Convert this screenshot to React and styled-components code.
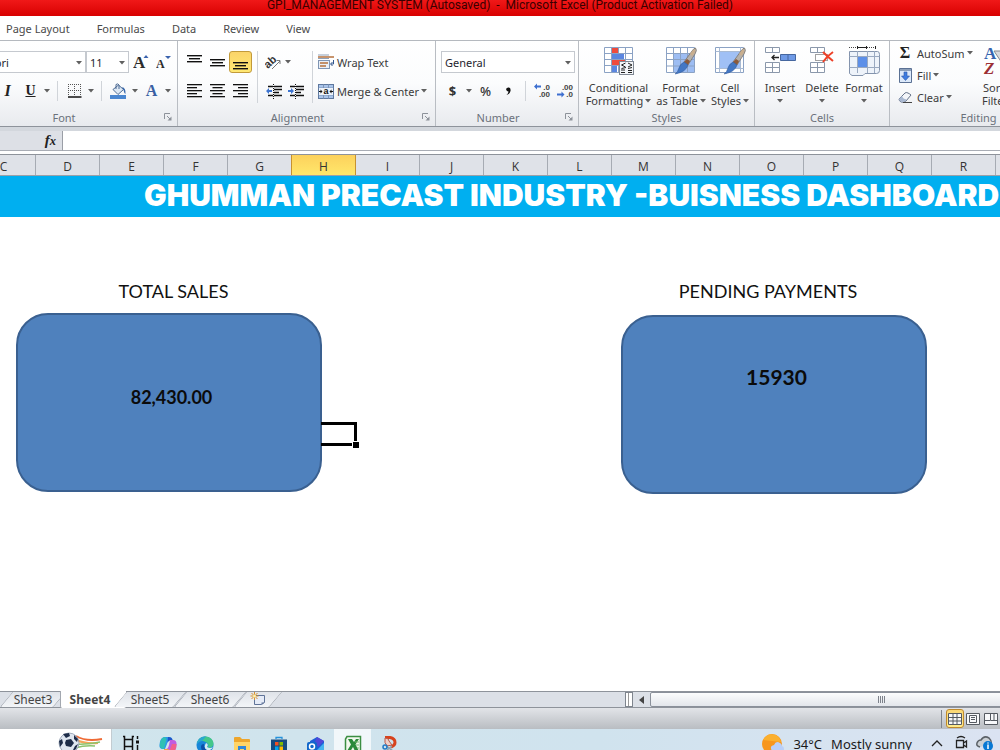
import React from 'react';
import styled, { createGlobalStyle, css } from 'styled-components';

const GlobalStyle = createGlobalStyle`
    * {
        box-sizing: border-box;
    }
    body {
        margin: 0;
        overflow: hidden;
        background: #fff;
        font-family: 'Noto Sans', 'Open Sans', sans-serif;
        font-size: 11px;
        color: #3b3b3b;
    }
    button,
    select,
    input {
        font: inherit;
        color: inherit;
        margin: 0;
        padding: 0;
        border: 0;
        background: none;
    }
    svg {
        display: block;
        flex: none;
    }
`;

const Window = styled.div`
    display: flex;
    flex-direction: column;
    height: 100vh;
    overflow: hidden;
`;

/* ---------- title bar and ribbon tabs ---------- */

const TitleBar = styled.header`
    display: flex;
    justify-content: center;
    flex: none;
    height: 16px;
    overflow: hidden;
    background: linear-gradient(#f01818, #d80000);
    color: #3a0000;
    font-family: Roboto, sans-serif;
    font-size: 12px;
    line-height: 10px;
    white-space: pre;
`;

const RibbonTabs = styled.nav`
    display: flex;
    flex: none;
    gap: 27px;
    height: 25px;
    padding-left: 6px;
    border-bottom: 1px solid #b5b9bf;
    background: #fff;
`;

const RibbonTab = styled.button`
    color: #4a4a4a;
    line-height: 26px;
    white-space: nowrap;
`;

/* ---------- ribbon ---------- */

const Ribbon = styled.div`
    display: flex;
    flex: none;
    height: 86px;
    overflow: hidden;
    border-bottom: 1px solid #8e939b;
    background: linear-gradient(#fff, #fbfcfd 50%, #e8eaee);
`;

const Group = styled.section`
    display: flex;
    flex-direction: column;
    flex: none;
    width: ${({ $width }) => $width}px;
    margin-left: ${({ $scrolled }) => ($scrolled ? -$scrolled : 0)}px;
    border-right: 1px solid #b9bdc3;
`;

const GroupBody = styled.div`
    display: flex;
    flex: 1;
    padding: 0 ${({ $pad = 4 }) => $pad}px;
`;

const GroupTitle = styled.footer`
    display: flex;
    align-items: center;
    height: 18px;
    color: #6b717b;

    span {
        flex: 1;
        text-align: center;
    }

    svg {
        margin: 0 5px;
    }
`;

const Rows = styled.div`
    display: flex;
    flex-direction: column;
    gap: 5px;
    padding-top: 9px;
`;

const Row = styled.div`
    display: flex;
    align-items: center;
    height: 24px;
`;

const Tool = styled.button`
    display: flex;
    align-items: center;
    justify-content: center;
    flex: none;
    width: ${({ $width = 23 }) => $width}px;
    height: 24px;
    border-radius: 3px;

    ${({ $active }) =>
        $active &&
        css`
            height: 22px;
            border: 1px solid #c29a3a;
            background: linear-gradient(#fbd469, #ffe873);
        `}
`;

const TextTool = styled.button`
    display: flex;
    align-items: center;
    gap: 2px;
    height: 22px;
    white-space: nowrap;
`;

const Glyph = styled.span`
    color: ${({ $color = '#222' }) => $color};
    font-family: 'Liberation Serif', serif;
    font-size: ${({ $size = 16 }) => $size}px;
    font-weight: bold;
    font-style: ${({ $italic }) => ($italic ? 'italic' : 'normal')};
    text-decoration: ${({ $underline }) => ($underline ? 'underline' : 'none')};
    line-height: 20px;
`;

const Symbol = styled.span`
    color: #333;
    font-size: 13px;
    font-weight: ${({ $bold }) => ($bold ? 700 : 500)};
`;

const Separator = styled.i`
    flex: none;
    width: 1px;
    height: ${({ $tall }) => ($tall ? 52 : 20)}px;
    margin: ${({ $tall }) => ($tall ? '10px 5px 0' : '0 5px')};
    background: #d0d4d9;
`;

const Field = styled.label`
    position: relative;
    display: block;
    width: ${({ $width }) => $width}px;

    select {
        display: block;
        width: 100%;
        height: 22px;
        padding-left: ${({ $inset = 3 }) => $inset}px;
        appearance: none;
        border: 1px solid #c5c9cf;
        background: #fff;
        color: #1e1e2e;
    }

    svg {
        position: absolute;
        top: 10px;
        right: 4px;
    }
`;

const LargeTool = styled.button`
    display: flex;
    flex-direction: column;
    align-items: center;
    flex: none;
    width: ${({ $width }) => $width}px;
    padding-top: 5px;
    line-height: 13px;
    white-space: nowrap;

    > svg {
        margin-bottom: 5px;
    }

    span {
        display: flex;
        align-items: center;
        gap: 2px;
        height: 13px;
    }
`;

const EditRows = styled.div`
    display: flex;
    flex-direction: column;
    width: 82px;
    padding-top: 1px;
`;

/* ---------- formula bar and worksheet ---------- */

const FormulaBar = styled.div`
    display: flex;
    flex: none;
    height: 28px;
    padding: 4px 0 3px;
    border-bottom: 1px solid #8e939b;
    background: linear-gradient(#d3d7dd 4px, #fff 4px);

    label {
        display: flex;
        align-items: center;
        justify-content: flex-end;
        width: 63px;
        padding-right: 6px;
        border-right: 1px solid #9a9ea6;
        border-bottom: 1px solid #a9adb5;
        background: #dde0e6;
    }

    input {
        flex: 1;
        border-bottom: 1px solid #a9adb5;
        background: #fff;
    }
`;

const ColumnHeaders = styled.div`
    display: flex;
    flex: none;
    height: 21px;
    margin-left: -28px;
    overflow: hidden;
    border-bottom: 1px solid #9ba0a8;
    background: #dfe2e8;
`;

const ColumnHeader = styled.button`
    flex: none;
    width: 64px;
    border-right: 1px solid #a6abb3;
    color: #333;
    font-family: 'Open Sans', sans-serif;
    font-size: 12px;
    line-height: 23px;

    ${({ $active }) =>
        $active &&
        css`
            border-right-color: #c7922f;
            box-shadow: -1px 0 #c7922f;
            background: linear-gradient(#fcd15c, #ffe76b);
        `}
`;

const Sheet = styled.main`
    flex: 1;
    min-height: 0;
    overflow: hidden;
    background: #fff;
`;

const Banner = styled.h1`
    height: 41px;
    margin: 0;
    padding-left: 144px;
    overflow: hidden;
    background: #00aff0;
    color: #fff;
    font-family: Inter, 'Liberation Sans', sans-serif;
    font-size: 30px;
    font-weight: 900;
    line-height: 38px;
    white-space: nowrap;
`;

const Metrics = styled.div`
    display: flex;
    justify-content: space-between;
    padding: 62px 73px 0 16px;
    font-family: Lato, sans-serif;
    color: #111;
`;

const Metric = styled.section`
    position: relative;
    width: 306px;
`;

const MetricTitle = styled.h2`
    height: 34px;
    margin: 0;
    padding: ${({ $align }) => ($align === 'left' ? '0 12px 0 0' : '0 0 0 9px')};
    font-size: 18px;
    font-weight: 400;
    line-height: 24px;
    text-align: center;
`;

const MetricCard = styled.div`
    height: 179px;
    margin-top: ${({ $drop = 0 }) => $drop}px;
    padding: ${({ $inset }) => $inset}px 0 0 5px;
    border: 2px solid #3a6090;
    border-radius: 32px;
    background: #4f81bd;
    color: #0b0b0b;
    font-size: ${({ $size }) => $size}px;
    font-weight: 700;
    line-height: 24px;
    text-align: center;
`;

const Selection = styled.i`
    position: absolute;
    top: 143px;
    left: 305px;
    width: 36px;
    height: 24px;
    border: 3px solid #000;
    border-left: 0;

    &::after {
        content: '';
        position: absolute;
        right: -5px;
        bottom: -5px;
        width: 6px;
        height: 6px;
        border: 1px solid #fff;
        border-width: 1px 0 0 1px;
        background: #000;
    }
`;

/* ---------- sheet tabs and status bar ---------- */

const SheetBar = styled.div`
    display: flex;
    justify-content: space-between;
    flex: none;
    height: 17px;
    border-top: 1px solid #8e939b;
    border-bottom: 1px solid #8e939b;
    background: #dce0e7;
`;

const SheetTabs = styled.nav`
    display: flex;
    padding-left: 6px;
`;

const SheetTab = styled.button`
    position: relative;
    display: flex;
    justify-content: center;
    width: ${({ $width = 60 }) => $width}px;
    color: #444;
    font-size: 12px;
    font-weight: ${({ $active }) => ($active ? 700 : 400)};
    line-height: 15px;

    &::before {
        content: '';
        position: absolute;
        inset: 0;
        border: 1px solid #a3a8b0;
        border-width: 0 1px 0 1px;
        border-radius: 0 0 2px 2px;
        background: linear-gradient(#dfe3e9, #f3f5f8);
        transform: skewX(-40deg);

        ${({ $active }) =>
            $active &&
            css`
                inset: -1px -6px -1px 0;
                border-width: 0 0 0 1px;
                background: #fff;
                transform: none;
            `}
    }

    span,
    svg {
        position: relative;
    }
`;

const ScrollBar = styled.div`
    display: flex;
    width: 375px;
    overflow: hidden;
`;

const Splitter = styled.i`
    flex: none;
    width: 8px;
    border: 1px solid #7f858e;
    background: linear-gradient(90deg, #fff 2px, #999 2px, #999 3px, #fff 3px);
`;

const ScrollArrow = styled.button`
    display: flex;
    align-items: center;
    justify-content: center;
    flex: none;
    width: 17px;
`;

const ScrollThumb = styled.button`
    display: flex;
    align-items: center;
    justify-content: center;
    flex: none;
    gap: 1px;
    width: 462px;
    border: 1px solid #8a909a;
    border-radius: 2px;
    background: linear-gradient(#fbfcfd, #e3e6eb);

    i {
        width: 1px;
        height: 7px;
        background: #7d828b;
    }
`;

const StatusBar = styled.footer`
    display: flex;
    align-items: center;
    justify-content: flex-end;
    flex: none;
    height: 21px;
    overflow: hidden;
    background: linear-gradient(#e2e4e8, #b9bdc2);
`;

const ViewButton = styled.button`
    display: flex;
    align-items: center;
    justify-content: center;
    flex: none;
    width: 18px;
    height: 19px;
    border-radius: 3px;

    ${({ $active }) =>
        $active &&
        css`
            border: 1px solid #c08a2c;
            background: linear-gradient(#fbd774, #ffec8c);
        `}
`;

const ViewDivider = styled.i`
    width: 1px;
    height: 18px;
    margin-right: 4px;
    background: #80858c;
`;

/* ---------- taskbar ---------- */

const Taskbar = styled.footer`
    display: flex;
    flex: none;
    height: 21px;
    overflow: hidden;
    background: linear-gradient(90deg, #d0e5ec, #d0e3ee 60%, #dbe3f2);
    color: #1a1a1a;
`;

const SearchBox = styled.button`
    display: flex;
    width: 112px;
    height: 21px;
    padding: 3px 0 0 58px;
    border-right: 1px solid #c3ccd1;
    background: #fff;
`;

const TaskButton = styled.button`
    display: flex;
    justify-content: center;
    width: 37px;
    height: 40px;
    padding-top: 6px;
    background: ${({ $active }) => ($active ? '#f1f7fa' : 'none')};
`;

const Tray = styled.div`
    display: flex;
    flex: 1;
    justify-content: flex-end;
    padding-right: 3px;
    font-size: 13px;
    line-height: 20px;
    white-space: nowrap;
`;

const Weather = styled.button`
    display: flex;
    gap: 9px;
    height: 30px;
    padding: 5px 13px 0 0;
`;

const TrayButton = styled.button`
    display: flex;
    justify-content: center;
    width: 24px;
    height: 30px;
    padding-top: 6px;
`;

/* ---------- icons ---------- */

const Caret = () => (
    <svg width="6" height="4" viewBox="0 0 6 4" aria-hidden="true">
        <path d="M0 0h6L3 3.500z" fill="#606060" />
    </svg>
);

const Launcher = () => (
    <svg width="8" height="8" viewBox="0 0 8 8" fill="none" stroke="#8d929a" aria-hidden="true">
        <path d="M.5 6V.5H6M3 3l3.500 3.500" />
        <path d="M7.500 3.500V7.500H3.500z" fill="#8d929a" stroke="none" />
    </svg>
);

const Lines = ({ widths, align = 'left', step = 3 }) => (
    <svg width="16" height="16" viewBox="0 0 16 16" aria-hidden="true">
        {widths.map((w, i) => {
            const x = { left: 0, center: (15 - w) / 2, right: 15 - w }[align];
            return <rect key={i} x={x} y={1 + i * step} width={w} height="1.300" fill="#111" />;
        })}
    </svg>
);

const VerticalLines = ({ top }) => (
    <svg width="16" height="20" viewBox="0 0 16 20" fill="#111" aria-hidden="true">
        {[15, 11, 15].map((w, i) => (
            <rect key={i} x={(15 - w) / 2} y={top + i * 3} width={w} height="1.400" />
        ))}
    </svg>
);

const GrowFont = ({ shrink }) => (
    <svg width="16" height="18" viewBox="0 0 16 18" aria-hidden="true">
        <text
            x="0"
            y="15"
            fontFamily="Liberation Serif"
            fontWeight="bold"
            fontSize={shrink ? 12 : 17}
            fill="#2c2c2c"
        >
            A
        </text>
        <path d={shrink ? 'M9 3h6l-3 3z' : 'M10.500 5h5l-2.500-3z'} fill="#3a62ad" />
    </svg>
);

const BordersIcon = () => (
    <svg width="14" height="14" viewBox="0 0 14 14" fill="none" stroke="#555" aria-hidden="true">
        <path d="M0 .5h13M0 6.500h13M.5 0v12M6.500 0v12M12.500 0v12" strokeDasharray="1 1" />
        <path d="M0 13h13.500" stroke="#111" strokeWidth="1.500" />
    </svg>
);

const FillColorIcon = () => (
    <svg width="17" height="16" viewBox="0 0 17 16" aria-hidden="true">
        <path d="M3 6.500 8.500 2l5 4.500-5.500 5z" fill="#dde8f4" stroke="#4d6b94" />
        <path d="M6 6V1.500Q8 0 9 2v4" fill="none" stroke="#4d6b94" />
        <path d="M12 4q4 1 3.500 7-1.500-1-2-4z" fill="#3767ab" />
        <rect y="12" width="16" height="4" fill="#4a86d0" />
    </svg>
);

const OrientationIcon = () => (
    <svg width="18" height="18" viewBox="0 0 18 18" aria-hidden="true">
        <text
            x="-1"
            y="12"
            fontFamily="Liberation Sans"
            fontWeight="bold"
            fontSize="11"
            fill="#333"
            transform="rotate(-42 6 9)"
        >
            ab
        </text>
        <path d="m7 16 8-8m0 3V7.500H11.500" fill="none" stroke="#777" />
    </svg>
);

const IndentIcon = ({ increase }) => (
    <svg width="17" height="15" viewBox="0 0 17 15" aria-hidden="true">
        <path
            d="M2 2.500h5M8 2.500h8M8 5.500h8M8 8.500h5M2 11.500h5M8 11.500h8"
            stroke="#111"
            strokeWidth="1.500"
        />
        <path d="M7.500 0v15" stroke="#111" strokeDasharray="1 1" />
        <path d={increase ? 'M6 7 3 4v2H0v2h3v2z' : 'M0 7l3-3v2h3v2H3v2z'} fill="#3d74d0" />
    </svg>
);

const WrapIcon = () => (
    <svg width="17" height="16" viewBox="0 0 17 16" fill="none" aria-hidden="true">
        <path d="M0 1h11M0 4.500h11" stroke="#8fa1b8" />
        <path d="M0 3h16" stroke="#b5713c" strokeWidth="1.500" />
        <rect x=".5" y="6.500" width="11" height="8" fill="#e9eff7" stroke="#7f95b3" />
        <path d="M2 9h8M2 12h6" stroke="#b5713c" strokeWidth="1.300" />
        <path d="M15.500 6v4H13m1.500-2L12.500 10l2 2" stroke="#31568e" />
    </svg>
);

const MergeIcon = () => (
    <svg width="17" height="15" viewBox="0 0 17 15" aria-hidden="true">
        <rect x=".5" y=".5" width="15" height="14" fill="#a9c4ea" stroke="#5e789e" />
        <path d="M.5 4h15M.5 11h15M5.500.5V4M10.500.5V4M5.500 11v3.500M10.500 11v3.500" stroke="#7d95b8" />
        <rect x="1" y="4" width="14" height="7" fill="#edf3fb" />
        <text x="5.500" y="10" fontFamily="Liberation Sans" fontWeight="bold" fontSize="9" fill="#111">
            a
        </text>
        <path d="M1 7.500h3M12 7.500h3" stroke="#111" />
        <path d="M2.500 5.500v4l2-2zM13.500 5.500v4l-2-2z" fill="#111" />
    </svg>
);

const DecimalIcon = ({ decrease }) => (
    <svg
        width="17"
        height="16"
        viewBox="0 0 17 16"
        fontFamily="Liberation Sans"
        fontWeight="bold"
        fontSize="8"
        fill="#444"
        aria-hidden="true"
    >
        <text x="16" y="7" textAnchor="end">
            {decrease ? '.00' : '.0'}
        </text>
        <text x="16" y="14" textAnchor="end">
            {decrease ? '.0' : '.00'}
        </text>
        <path
            d={decrease ? 'M7.500 11.500l-3-3v2H0v2h4.500v2z' : 'M0 3.500l3-3v2h4v2H3v2z'}
            fill="#3d6fd0"
        />
    </svg>
);

const ConditionalIcon = () => (
    <svg width="32" height="30" viewBox="0 0 32 30" aria-hidden="true">
        <rect x="1.500" y="1.500" width="28" height="25" fill="#fff" />
        <rect x="9" y="1" width="6" height="7" fill="#ef4b3c" />
        <rect x="9" y="7" width="12" height="7" fill="#5b86e0" />
        <rect x="9" y="14" width="14" height="6" fill="#ef4b3c" />
        <rect x="9" y="20" width="5" height="6" fill="#5b86e0" />
        <path
            d="M1.500 1.500h28v25h-28zM1.500 7.500h28M1.500 13.500h28M1.500 19.500h28M8.500 1.500v25M15.500 1.500v6M15.500 19.500v7M22.500 1.500v25"
            fill="none"
            stroke="#8ba2c4"
        />
        <rect x="16.500" y="15.500" width="14" height="13" fill="#f4f6f9" stroke="#7f8792" />
        <path
            d="m22.500 17-4 2 4 2M18.500 22.500l4.500-1M18 24h4M18 26.500h4M25 17l4 2-4 2M25 22.500l4-1M25 24.500h4M25 26.500h4"
            fill="none"
            stroke="#222"
        />
    </svg>
);

const Brush = () => (
    <>
        <path d="M30.500 2q2 2-.5 6l-7 11-4-3 8-11q2-3 3.500-3z" fill="#b5b0aa" stroke="#77726d" strokeWidth=".8" />
        <path d="M30 3q1 1-1 5l-2 2-2-2 3-4z" fill="#c9ae8d" />
        <path d="m22 13 3 2-2 4-4-3z" fill="#8b5a3b" />
        <path d="m19 16 4 3q-2 7-13 9 3-2 4-6 1-4 5-6z" fill="#4377c4" stroke="#315a9c" strokeWidth=".6" />
    </>
);

const TableIcon = () => (
    <svg width="32" height="30" viewBox="0 0 32 30" aria-hidden="true">
        <path d="M1.500 1.500h28v25h-28z" fill="#fff" />
        <path d="M8 8h21v18H8z" fill="#9dbdf3" />
        <path
            d="M1.500 1.500h28v25h-28zM1.500 7.500h28M1.500 13.500h28M1.500 20h28M8.500 1.500v25M15.500 1.500v25M22.500 1.500v25"
            fill="none"
            stroke="#8ba2c4"
        />
        <Brush />
    </svg>
);

const CellStylesIcon = () => (
    <svg width="32" height="30" viewBox="0 0 32 30" aria-hidden="true">
        <path d="M1.500 1.500h28v25h-28z" fill="#fff" stroke="#8ba2c4" />
        <path d="M1.500 5.500h28M1.500 22.500h28M5.500 1.500v25M26.500 1.500v25" stroke="#a8bad3" />
        <path d="M6 6h20v16H6z" fill="#a0c0f5" />
        <Brush />
    </svg>
);

const InsertIcon = () => (
    <svg width="32" height="30" viewBox="0 0 32 30" fill="#fff" stroke="#8b98ab" aria-hidden="true">
        <path d="M1.500 1.500h14v5h-14zM8.500 1.500v5M1.500 16.500h14v10h-14zM8.500 16.500v10M1.500 21.500h14" />
        <path d="M16.500 8.500h15v6h-15z" fill="#6f9ae6" stroke="#46679f" />
        <path d="M24 9v5" stroke="#46679f" />
        <path d="M8 11.500h7M10.500 9 8 11.500l2.500 2.500" fill="none" stroke="#222" strokeWidth="1.300" />
    </svg>
);

const DeleteIcon = () => (
    <svg width="26" height="30" viewBox="0 0 26 30" fill="#fff" stroke="#8b98ab" aria-hidden="true">
        <path d="M1.500 1.500h14v5h-14zM8.500 1.500v5M1.500 16.500h14v10h-14zM8.500 16.500v10M1.500 21.500h14" />
        <path d="M6.500 8.500h12v6h-12z" stroke="#444" strokeDasharray="1 1" />
        <path d="M14 6q5 5 10 9M24 6q-6 4-10 10" fill="none" stroke="#ee4128" strokeWidth="2" />
    </svg>
);

const FormatIcon = () => (
    <svg width="32" height="30" viewBox="0 0 32 30" fill="none" aria-hidden="true">
        <path d="M1 1.500h27" stroke="#444" strokeDasharray="1 1" />
        <path d="M9.500 0v3M18.500 0v3M27.500 0v3M10 1.500h8" stroke="#222" />
        <path d="M1.500 5.500h28q2 0 2 3v16q0 3-3 3H17l-2 2H4l-2.500-2z" fill="#eef3fa" stroke="#8494ad" />
        <path d="M1.500 10.500h30M1.500 21.500h30M9.500 5v22M19.500 5v22M26.500 5v22" stroke="#9aa9c0" />
        <path d="M10 11h9v10h-9z" fill="#5c8fe8" />
    </svg>
);

const FillIcon = () => (
    <svg width="13" height="15" viewBox="0 0 13 15" aria-hidden="true">
        <path d="M.5.5h12v14H.5z" fill="#dce9fa" stroke="#5b7194" />
        <path d="M1 1h11v2H1z" fill="#8c9fb9" />
        <path d="M5 4h3v4h2.500L6.500 12.500 2.500 8H5z" fill="#3e7ce0" stroke="#2c58a8" strokeWidth=".6" />
    </svg>
);

const EraserIcon = () => (
    <svg width="14" height="13" viewBox="0 0 14 13" aria-hidden="true">
        <path d="m1 8 6-6q1-1 3 0t3 2L8 10q-3 2-5 1T1 8z" fill="#f3f5f9" stroke="#66738a" />
        <path d="m1 8 3-3q1 3 4.500 3.500L7 10.500Q2 12 1 8z" fill="#aab9d2" />
        <path d="M5 11.500h9" stroke="#444" />
    </svg>
);

const SortIcon = () => (
    <svg
        width="34"
        height="30"
        viewBox="0 0 34 30"
        fontFamily="Liberation Serif"
        fontWeight="bold"
        fontSize="17"
        aria-hidden="true"
    >
        <path d="M12 5h20v4l-7 8v9l-5-3v-6z" fill="#d8d9dc" stroke="#85888e" />
        <text x="2" y="13" fill="#3564ae">
            A
        </text>
        <text x="2" y="28" fontStyle="italic" fill="#9c2f35">
            Z
        </text>
    </svg>
);

const NewSheetIcon = () => (
    <svg width="17" height="14" viewBox="0 0 17 14" aria-hidden="true">
        <path d="M4.500 3.500h10v7l-3 2h-7z" fill="#e5ebf7" stroke="#5f7398" />
        <path d="m14.500 10.500-3 2v-2z" fill="#5f7398" />
        <path d="M4.500 0v8M.5 4h8M1.500 1l6 6M7.500 1l-6 6" stroke="#d9912d" />
        <circle cx="4.500" cy="4" r="1.500" fill="#fff1a8" />
    </svg>
);

const ViewIcon = ({ d }) => (
    <svg width="14" height="12" viewBox="0 0 14 12" fill="#f7f8fa" stroke="#555a61" aria-hidden="true">
        <path d="M.5.5h13v11H.5z" />
        <path d={d} fill="none" />
    </svg>
);

const FootballIcon = () => (
    <svg width="46" height="20" viewBox="0 0 46 20" fill="none" aria-hidden="true">
        <path d="M18 4q10 6 26 3" stroke="#ef6b35" strokeWidth="2" />
        <path d="M18 8q9 4 22 3" stroke="#f3a458" strokeWidth="2" />
        <path d="M18 12q8 1 24-2M17 16q10-3 20-2" stroke="#8cc36c" strokeWidth="1.500" />
        <circle cx="11" cy="11" r="10" fill="#dfe6f0" stroke="#6e7d96" strokeWidth=".6" />
        <path
            d="m8 8 5-1 3 4-3 4-5-1-1-3zM5 2l6-1 1 3-4 2zM16 3l4 4-1 3-3-3zM1 9l3-2 1 4-3 4zM17 14l3-2-2 5-4 3z"
            fill="#1d2c48"
        />
    </svg>
);

const TaskViewIcon = () => (
    <svg width="18" height="20" viewBox="0 0 18 20" fill="none" stroke="#111" strokeWidth="1.500" aria-hidden="true">
        <path d="M1 1.500h1.500v3h8v-3H12M2.500 4v14M10.500 4v14M2.500 11.500h8M15.500 1v3M15.500 10v8" />
        <path d="M14 5.500h3v3h-3z" fill="#111" stroke="none" />
    </svg>
);

const CopilotIcon = () => (
    <svg width="18" height="20" viewBox="0 0 18 20" aria-hidden="true">
        <path d="M5 2h5q3 0 3.500 3H11q-2 0-3 4l-2 5H4q-4 0-3.500-4Q1 3 5 2z" fill="#2a9ae8" />
        <path d="M1 8q1-6 5-6 2 1 1 4l-2 8q-5 0-4-6z" fill="#30c0b4" />
        <path d="M9 2q4 0 4.500 3-4 0-5 3z" fill="#2254c8" />
        <path d="M11 5h3q4 0 3.500 5-.5 7-5 7H8q-2 0-3-3h2q2 0 3-4z" fill="#c05ce0" />
        <path d="M17.500 9q0 8-5 8H10l3-8z" fill="#f0608c" />
        <path d="M5 14h4q2 1 2 3H8q-2 0-3-3z" fill="#f7a53d" />
    </svg>
);

const EdgeIcon = () => (
    <svg width="18" height="20" viewBox="0 0 18 20" aria-hidden="true">
        <circle cx="9" cy="10" r="8.500" fill="#1785d8" />
        <path d="M1 8Q3 1 10 1.500q7 1 7.500 7 0 5-6 4 2-3-1-5Q5 4 1 8z" fill="#43c78b" />
        <path d="M1 8Q3 1 10 1.500L6 6Q3 6 1 9z" fill="#2aa8d0" />
        <path d="M8 9q-1 6 7 6 2 0 0 1-9 4-10-4 0-3 3-3z" fill="#0c4fa8" />
        <path d="M10 8q3 1 1 4 3 2 6 0-2 4-6 3-4-2-1-7z" fill="#d6ebf1" />
    </svg>
);

const FolderIcon = () => (
    <svg width="18" height="20" viewBox="0 0 18 20" aria-hidden="true">
        <path d="M1 3q0-1 1-1h5l2 2h7q1 0 1 1v13H1z" fill="#eda62d" />
        <path d="M1 7h16v11H1z" fill="#ffd466" />
        <path d="M5 11h8v7h-2v-4H7v4H5z" fill="#3287d8" />
    </svg>
);

const StoreIcon = () => (
    <svg width="18" height="20" viewBox="0 0 18 20" aria-hidden="true">
        <path d="M6 4V2.500h6V4" fill="none" stroke="#2592dc" strokeWidth="1.300" />
        <path d="M1 4.500h16V18H1z" fill="#174a7e" />
        <path d="M5 7h3.500v3.500H5z" fill="#f25022" />
        <path d="M9.500 7H13v3.500H9.500z" fill="#7fba00" />
        <path d="M5 11.500h3.500V15H5z" fill="#00a4ef" />
        <path d="M9.500 11.500H13V15H9.500z" fill="#ffb900" />
    </svg>
);

const OutlookIcon = () => (
    <svg width="18" height="20" viewBox="0 0 18 20" aria-hidden="true">
        <path d="m3 6 7-4 7 4v12H3z" fill="#1d5fd6" />
        <path d="m10 2 7 4-6 6-3-5z" fill="#5148d8" />
        <path d="M17 8v10H7z" fill="#42b4ef" />
        <rect y="7" width="10" height="10" rx="2" fill="#1267ca" />
        <circle cx="5" cy="11.500" r="2.500" fill="none" stroke="#fff" strokeWidth="1.500" />
    </svg>
);

const ExcelIcon = () => (
    <svg width="18" height="20" viewBox="0 0 18 20" aria-hidden="true">
        <path d="M3 1.500h13.500v17H1.500V4z" fill="#f2f8ee" stroke="#3b8e42" strokeWidth="1.500" />
        <path d="M4 4h4l2 3 2-3h3l-3.500 5.500L15 16h-4l-2-4-2.500 4H3l4-6.500z" fill="#2b8a3a" />
        <path d="M11 7h4M12 10h3M13 13h2" stroke="#79b870" />
    </svg>
);

const SnipIcon = () => (
    <svg width="18" height="20" viewBox="0 0 18 20" fill="none" aria-hidden="true">
        <path d="M4 2.500h5q5 1 5 5 0 3-4 4.500" stroke="#d7431d" strokeWidth="3" />
        <path d="M4 3q4 0 4 3l3 4-5 1q-3-3-2-8z" fill="#f0cfc6" stroke="#b9594a" />
        <path d="m5 11 7 5M11 11l-5 4" stroke="#8ca0ae" strokeWidth="1.500" />
        <circle cx="4" cy="12" r="2" stroke="#2279c5" strokeWidth="1.500" />
    </svg>
);

const WeatherIcon = () => (
    <svg width="22" height="22" viewBox="0 0 22 22" aria-hidden="true">
        <circle cx="10" cy="10" r="10" fill="#f7961d" />
        <path d="M1 6Q5-1 12 .5 18 2 19 8z" fill="#fbb02e" />
        <path d="M10 17q-3-5 2-6 2-5 6-2 2 1 2 3 3 1 1.500 5z" fill="#b9cff8" />
    </svg>
);

/* ---------- ribbon groups ---------- */

const FontGroup = () => (
    <Group $width={209} $scrolled={31}>
        <GroupBody $pad={0}>
            <Rows>
                <Row>
                    <Field $width={117} $inset={6}>
                        <select aria-label="Font" defaultValue="Calibri">
                            <option>Calibri</option>
                        </select>
                        <Caret />
                    </Field>
                    <Field $width={43}>
                        <select aria-label="Font size" defaultValue="11">
                            <option>11</option>
                        </select>
                        <Caret />
                    </Field>
                    <Tool aria-label="Grow font">
                        <GrowFont />
                    </Tool>
                    <Tool aria-label="Shrink font">
                        <GrowFont shrink />
                    </Tool>
                </Row>
                <Row>
                    <Tool $width={27} aria-label="Bold">
                        <Glyph>B</Glyph>
                    </Tool>
                    <Tool aria-label="Italic">
                        <Glyph $italic>I</Glyph>
                    </Tool>
                    <Tool aria-label="Underline">
                        <Glyph $size={14} $underline>
                            U
                        </Glyph>
                    </Tool>
                    <Tool $width={10} aria-label="Underline styles">
                        <Caret />
                    </Tool>
                    <Separator />
                    <Tool aria-label="Borders">
                        <BordersIcon />
                    </Tool>
                    <Tool $width={10} aria-label="Border styles">
                        <Caret />
                    </Tool>
                    <Separator />
                    <Tool aria-label="Fill color">
                        <FillColorIcon />
                    </Tool>
                    <Tool $width={10} aria-label="Fill colors">
                        <Caret />
                    </Tool>
                    <Tool aria-label="Font color">
                        <Glyph $color="#3a5fa3">A</Glyph>
                    </Tool>
                    <Tool $width={10} aria-label="Font colors">
                        <Caret />
                    </Tool>
                </Row>
            </Rows>
        </GroupBody>
        <GroupTitle>
            <span>Font</span>
            <Launcher />
        </GroupTitle>
    </Group>
);

const AlignmentGroup = () => (
    <Group $width={258}>
        <GroupBody $pad={5}>
            <Rows>
                <Row>
                    <Tool aria-label="Top align">
                        <VerticalLines top={3} />
                    </Tool>
                    <Tool aria-label="Middle align">
                        <VerticalLines top={7} />
                    </Tool>
                    <Tool $active aria-label="Bottom align">
                        <VerticalLines top={10} />
                    </Tool>
                </Row>
                <Row>
                    {['left', 'center', 'right'].map((align) => (
                        <Tool key={align} aria-label={`Align ${align}`}>
                            <Lines widths={[15, 10, 15, 10, 15]} align={align} />
                        </Tool>
                    ))}
                </Row>
            </Rows>
            <Separator $tall />
            <Rows>
                <Row>
                    <Tool $width={22} aria-label="Orientation">
                        <OrientationIcon />
                    </Tool>
                    <Caret />
                </Row>
                <Row>
                    <Tool $width={22} aria-label="Decrease indent">
                        <IndentIcon />
                    </Tool>
                    <Tool $width={22} aria-label="Increase indent">
                        <IndentIcon increase />
                    </Tool>
                </Row>
            </Rows>
            <Separator $tall />
            <Rows>
                <Row>
                    <TextTool>
                        <WrapIcon />
                        Wrap Text
                    </TextTool>
                </Row>
                <Row>
                    <TextTool>
                        <MergeIcon />
                        Merge &amp; Center
                        <Caret />
                    </TextTool>
                </Row>
            </Rows>
        </GroupBody>
        <GroupTitle>
            <span>Alignment</span>
            <Launcher />
        </GroupTitle>
    </Group>
);

const NumberGroup = () => (
    <Group $width={143}>
        <GroupBody $pad={5}>
            <Rows>
                <Row>
                    <Field $width={134}>
                        <select aria-label="Number format" defaultValue="General">
                            <option>General</option>
                        </select>
                        <Caret />
                    </Field>
                </Row>
                <Row>
                    <Tool aria-label="Accounting format">
                        <Symbol $bold>$</Symbol>
                    </Tool>
                    <Tool $width={10} aria-label="Currencies">
                        <Caret />
                    </Tool>
                    <Tool aria-label="Percent style">
                        <Symbol>%</Symbol>
                    </Tool>
                    <Tool aria-label="Comma style">
                        <svg width="5" height="8" viewBox="0 0 5 8" aria-hidden="true">
                            <path d="M0 2Q1 0 3 .5 5 1 4.500 4 4 7 .5 8 2.500 6 2.500 4.500.5 4.500 0 2z" fill="#111" />
                        </svg>
                    </Tool>
                    <Separator />
                    <Tool aria-label="Increase decimal">
                        <DecimalIcon />
                    </Tool>
                    <Tool $width={22} aria-label="Decrease decimal">
                        <DecimalIcon decrease />
                    </Tool>
                </Row>
            </Rows>
        </GroupBody>
        <GroupTitle>
            <span>Number</span>
            <Launcher />
        </GroupTitle>
    </Group>
);

const StylesGroup = () => (
    <Group $width={176}>
        <GroupBody>
            <LargeTool $width={71}>
                <ConditionalIcon />
                <span>Conditional</span>
                <span>
                    Formatting <Caret />
                </span>
            </LargeTool>
            <LargeTool $width={54}>
                <TableIcon />
                <span>Format</span>
                <span>
                    as Table <Caret />
                </span>
            </LargeTool>
            <LargeTool $width={44}>
                <CellStylesIcon />
                <span>Cell</span>
                <span>
                    Styles <Caret />
                </span>
            </LargeTool>
        </GroupBody>
        <GroupTitle>
            <span>Styles</span>
        </GroupTitle>
    </Group>
);

const CellsGroup = () => (
    <Group $width={135}>
        <GroupBody>
            {[
                ['Insert', InsertIcon],
                ['Delete', DeleteIcon],
                ['Format', FormatIcon],
            ].map(([label, Icon]) => (
                <LargeTool key={label} $width={42}>
                    <Icon />
                    <span>{label}</span>
                    <span>
                        <Caret />
                    </span>
                </LargeTool>
            ))}
        </GroupBody>
        <GroupTitle>
            <span>Cells</span>
        </GroupTitle>
    </Group>
);

const EditingGroup = () => (
    <Group $width={178}>
        <GroupBody $pad={5}>
            <EditRows>
                <TextTool>
                    <Tool as="span" $width={20}>
                        <Glyph>Σ</Glyph>
                    </Tool>
                    AutoSum <Caret />
                </TextTool>
                <TextTool>
                    <Tool as="span" $width={20}>
                        <FillIcon />
                    </Tool>
                    Fill <Caret />
                </TextTool>
                <TextTool>
                    <Tool as="span" $width={20}>
                        <EraserIcon />
                    </Tool>
                    Clear <Caret />
                </TextTool>
            </EditRows>
            <LargeTool $width={44}>
                <SortIcon />
                <span>Sort &amp;</span>
                <span>
                    Filter <Caret />
                </span>
            </LargeTool>
        </GroupBody>
        <GroupTitle>
            <span>Editing</span>
        </GroupTitle>
    </Group>
);

const columns = 'CDEFGHIJKLMNOPQRS'.split('');
const views = [
    ['Normal', 'M.5 4.500h13M.5 8h13M5 .5v11M9 .5v11'],
    ['Page layout', 'M3.500 2.500h7v7h-7zM5 4.500h4M5 6.500h4'],
    ['Page break preview', 'M.5 7.500h6v-7M7 7.500h6M10 .5v7'],
];
const apps = [
    ['Copilot', CopilotIcon],
    ['Edge', EdgeIcon],
    ['File Explorer', FolderIcon],
    ['Store', StoreIcon],
    ['Outlook', OutlookIcon],
    ['Excel', ExcelIcon],
    ['Snipping Tool', SnipIcon],
];

const App = () => (
    <Window>
        <GlobalStyle />
        <TitleBar>
            {'GPI_MANAGEMENT SYSTEM (Autosaved)  -  Microsoft Excel (Product Activation Failed)'}
        </TitleBar>
        <RibbonTabs>
            {['Page Layout', 'Formulas', 'Data', 'Review', 'View'].map((tab) => (
                <RibbonTab key={tab}>{tab}</RibbonTab>
            ))}
        </RibbonTabs>
        <Ribbon>
            <FontGroup />
            <AlignmentGroup />
            <NumberGroup />
            <StylesGroup />
            <CellsGroup />
            <EditingGroup />
        </Ribbon>
        <FormulaBar>
            <label htmlFor="formula">
                <Glyph $italic $size={15}>
                    f<small>x</small>
                </Glyph>
            </label>
            <input id="formula" type="text" />
        </FormulaBar>
        <ColumnHeaders>
            {columns.map((name) => (
                <ColumnHeader key={name} $active={name === 'H'}>
                    {name}
                </ColumnHeader>
            ))}
        </ColumnHeaders>
        <Sheet>
            <Banner>GHUMMAN PRECAST INDUSTRY -BUISNESS DASHBOARD</Banner>
            <Metrics>
                <Metric>
                    <MetricTitle>TOTAL SALES</MetricTitle>
                    <MetricCard $inset={70} $size={18}>
                        82,430.00
                    </MetricCard>
                    <Selection />
                </Metric>
                <Metric>
                    <MetricTitle $align="left">PENDING PAYMENTS</MetricTitle>
                    <MetricCard $drop={2} $inset={48} $size={21}>
                        15930
                    </MetricCard>
                </Metric>
            </Metrics>
        </Sheet>
        <SheetBar>
            <SheetTabs>
                <SheetTab $width={54}>
                    <span>Sheet3</span>
                </SheetTab>
                <SheetTab $active>
                    <span>Sheet4</span>
                </SheetTab>
                <SheetTab>
                    <span>Sheet5</span>
                </SheetTab>
                <SheetTab>
                    <span>Sheet6</span>
                </SheetTab>
                <SheetTab $width={36} aria-label="Insert worksheet">
                    <NewSheetIcon />
                </SheetTab>
            </SheetTabs>
            <ScrollBar>
                <Splitter />
                <ScrollArrow aria-label="Scroll left">
                    <svg width="5" height="8" viewBox="0 0 5 8" aria-hidden="true">
                        <path d="M5 0v8L0 4z" fill="#444" />
                    </svg>
                </ScrollArrow>
                <ScrollThumb aria-label="Horizontal scroll">
                    <i />
                    <i />
                    <i />
                    <i />
                </ScrollThumb>
            </ScrollBar>
        </SheetBar>
        <StatusBar>
            <ViewDivider />
            {views.map(([label, d], i) => (
                <ViewButton key={label} $active={i === 0} aria-label={label}>
                    <ViewIcon d={d} />
                </ViewButton>
            ))}
        </StatusBar>
        <Taskbar>
            <SearchBox aria-label="Search">
                <FootballIcon />
            </SearchBox>
            <TaskButton aria-label="Task view">
                <TaskViewIcon />
            </TaskButton>
            {apps.map(([label, Icon]) => (
                <TaskButton key={label} $active={label === 'Excel'} aria-label={label}>
                    <Icon />
                </TaskButton>
            ))}
            <Tray>
                <Weather>
                    <WeatherIcon />
                    <span>34°C</span>
                    <span>Mostly sunny</span>
                </Weather>
                <TrayButton aria-label="Show hidden icons">
                    <svg width="12" height="16" viewBox="0 0 12 16" fill="none" stroke="#222" aria-hidden="true">
                        <path d="m1 11 5-5 5 5" strokeWidth="1.300" />
                    </svg>
                </TrayButton>
                <TrayButton aria-label="Meet now">
                    <svg width="13" height="16" viewBox="0 0 13 16" fill="none" stroke="#222" aria-hidden="true">
                        <path d="M2 3q4-3 8 0M1.500 5.500h7v7h-7zM8.500 8l3-2v6l-3-2z" strokeWidth="1.300" />
                    </svg>
                </TrayButton>
                <TrayButton aria-label="OneDrive">
                    <svg width="18" height="16" viewBox="0 0 18 16" aria-hidden="true">
                        <path d="M4 12q-4-1-3-4 1-3 4-3 3-5 8-2 3 3 2 6" fill="#cbd0d5" stroke="#5c6268" strokeWidth="1.500" />
                        <circle cx="12" cy="11" r="5" fill="#0878d4" />
                        <path d="M12 9.500V14M12 7.500v1" stroke="#fff" strokeWidth="1.500" />
                    </svg>
                </TrayButton>
            </Tray>
        </Taskbar>
    </Window>
);

export default App;
